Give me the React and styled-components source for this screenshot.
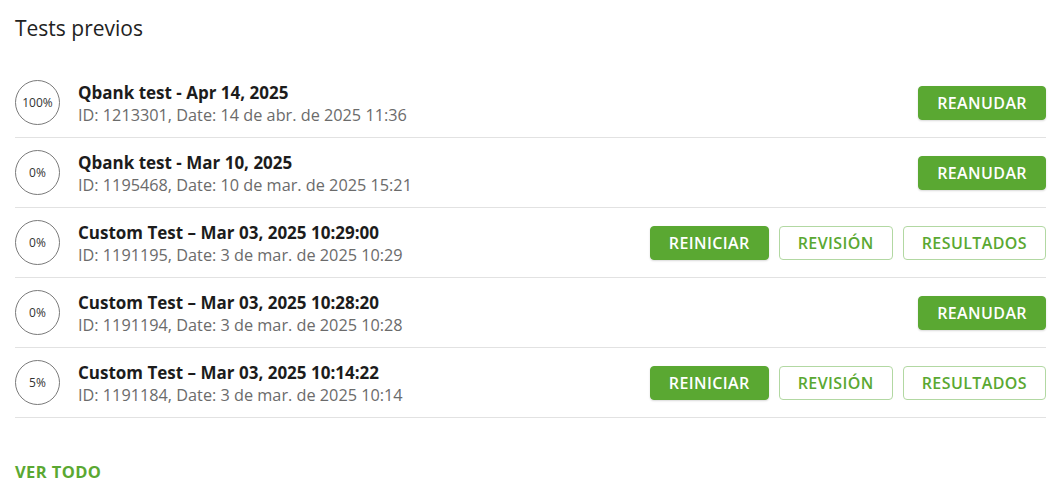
import React from 'react';
import styled, { createGlobalStyle } from 'styled-components';

const GlobalStyle = createGlobalStyle`
  body {
    margin: 0;
    background: #fff;
    font-family: 'Open Sans', 'Lato', sans-serif;
  }
`;

const Page = styled.div`
  padding: 0 6px 0 15px;
`;

const Heading = styled.h2`
  margin: 0;
  height: 68px;
  padding-top: 14px;
  box-sizing: border-box;
  font-size: 21px;
  line-height: 29px;
  font-weight: 400;
  color: #222;
`;

const List = styled.div`
  display: flex;
  flex-direction: column;
`;

const Row = styled.div`
  display: flex;
  align-items: center;
  height: 70px;
  box-sizing: border-box;
  border-bottom: 1px solid #e2e2e2;
`;

const Ring = styled.div`
  width: 45px;
  height: 45px;
  box-sizing: border-box;
  border: 1px solid #7a7a7a;
  border-radius: 50%;
  display: flex;
  align-items: center;
  justify-content: center;
  font-size: 12px;
  color: #333;
  flex-shrink: 0;
`;

const Info = styled.div`
  flex: 1;
  margin-left: 18px;
  padding-top: 2px;
  display: flex;
  flex-direction: column;
  line-height: 22px;
`;

const Title = styled.div`
  font-size: 17px;
  font-weight: 700;
  color: #1c1c1c;
`;

const Meta = styled.div`
  font-size: 16.25px;
  color: #6b6b6b;
`;

const Actions = styled.div`
  display: flex;
  gap: 10px;
`;

const Button = styled.button`
  height: 34px;
  box-sizing: border-box;
  padding: 0 18px;
  border-radius: 4px;
  font-family: inherit;
  font-size: 16px;
  letter-spacing: 0.4px;
  font-weight: 600;
  text-transform: uppercase;
  cursor: pointer;
  background: ${p => (p.$outline ? '#fff' : '#5aa832')};
  color: ${p => (p.$outline ? '#5aa832' : '#fff')};
  border: 1px solid ${p => (p.$outline ? '#b2d8a2' : '#5aa832')};
  box-shadow: ${p => (p.$outline ? 'none' : '0 1px 2px rgba(0,0,0,0.15)')};
`;

const MoreLink = styled.a`
  display: inline-block;
  margin-top: 42px;
  font-size: 16.5px;
  letter-spacing: 0.4px;
  font-weight: 700;
  color: #5aa832;
  text-decoration: none;
  text-transform: uppercase;
`;

const tests = [
  { pct: '100%', title: 'Qbank test - Apr 14, 2025', meta: 'ID: 1213301, Date: 14 de abr. de 2025 11:36', resume: true },
  { pct: '0%', title: 'Qbank test - Mar 10, 2025', meta: 'ID: 1195468, Date: 10 de mar. de 2025 15:21', resume: true },
  { pct: '0%', title: 'Custom Test – Mar 03, 2025 10:29:00', meta: 'ID: 1191195, Date: 3 de mar. de 2025 10:29', resume: false },
  { pct: '0%', title: 'Custom Test – Mar 03, 2025 10:28:20', meta: 'ID: 1191194, Date: 3 de mar. de 2025 10:28', resume: true },
  { pct: '5%', title: 'Custom Test – Mar 03, 2025 10:14:22', meta: 'ID: 1191184, Date: 3 de mar. de 2025 10:14', resume: false },
];

export default function App() {
  return (
    <>
      <GlobalStyle />
      <Page>
        <Heading>Tests previos</Heading>
        <List>
          {tests.map(t => (
            <Row key={t.meta}>
              <Ring>{t.pct}</Ring>
              <Info>
                <Title>{t.title}</Title>
                <Meta>{t.meta}</Meta>
              </Info>
              {t.resume ? (
                <Actions>
                  <Button>Reanudar</Button>
                </Actions>
              ) : (
                <Actions>
                  <Button>Reiniciar</Button>
                  <Button $outline>Revisión</Button>
                  <Button $outline>Resultados</Button>
                </Actions>
              )}
            </Row>
          ))}
        </List>
        <MoreLink href="#">Ver todo</MoreLink>
      </Page>
    </>
  );
}
